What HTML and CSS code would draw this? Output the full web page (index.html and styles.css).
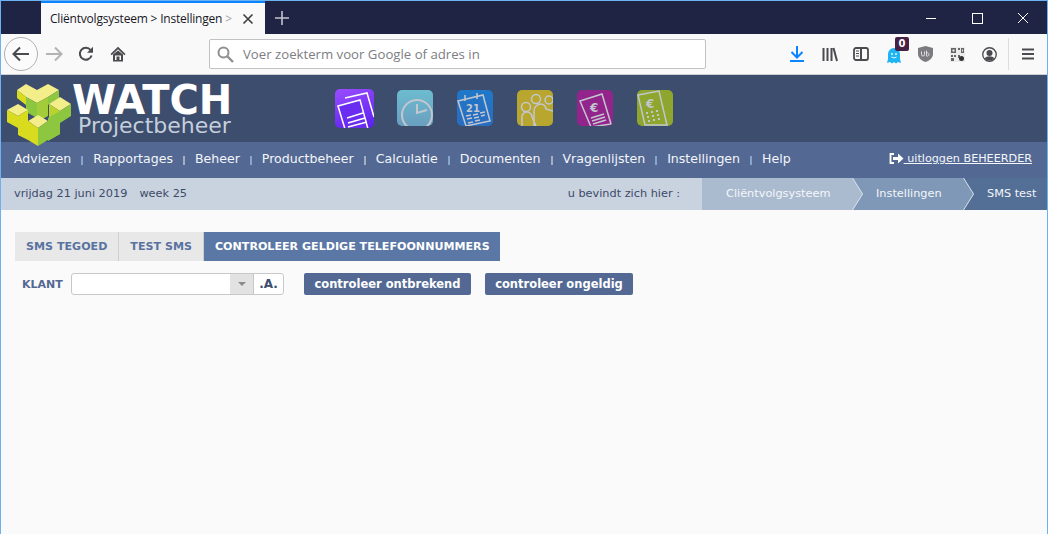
FILE: index.html
```html
<!DOCTYPE html>
<html lang="nl">
<head>
<meta charset="utf-8">
<title>Cliëntvolgsysteem</title>
<link rel="stylesheet" href="styles.css">
</head>
<body>
<div class="window">
  <div class="titlebar">
    <div class="tab">
      <span class="tab-title">Cliëntvolgsysteem &gt; Instellingen <span class="fade">&gt;</span></span>
      <svg class="tab-close" width="12" height="12" viewBox="0 0 12 12"><path d="M1.500 1.500l9 9M10.500 1.500l-9 9" stroke="#3d3d40" stroke-width="1.600" fill="none"/></svg>
    </div>
    <svg class="newtab" width="14" height="14" viewBox="0 0 14 14"><path d="M7 0v14M0 7h14" stroke="#c3c4cf" stroke-width="1.600" fill="none"/></svg>
    <div class="winctl">
      <svg width="46" height="32" viewBox="0 0 46 32"><path d="M18 16.500h10" stroke="#fff" fill="none"/></svg>
      <svg width="46" height="32" viewBox="0 0 46 32"><rect x="18.500" y="11.500" width="10" height="10" stroke="#fff" fill="none"/></svg>
      <svg width="46" height="32" viewBox="0 0 46 32"><path d="M18 11l10 10M28 11L18 21" stroke="#fff" fill="none"/></svg>
    </div>
  </div>
  <div class="toolbar">
    <div class="backbtn"><svg width="18" height="16" viewBox="0 0 18 16"><path d="M1.500 8H17M8 1.500L1.500 8 8 14.500" stroke="#4a4a4f" stroke-width="2" fill="none"/></svg></div>
    <svg class="tb fwd" width="18" height="16" viewBox="0 0 18 16"><path d="M16.500 8H1M10 1.500L16.500 8 10 14.500" stroke="#b3b3b5" stroke-width="2" fill="none"/></svg>
    <svg class="tb reload" width="16" height="16" viewBox="0 0 16 16"><path d="M13.600 9.500A6 6 0 1 1 12.600 4" stroke="#4a4a4f" stroke-width="2" fill="none"/><path d="M15 .8v6h-6z" fill="#4a4a4f"/></svg>
    <svg class="tb home" width="16" height="16" viewBox="0 0 16 16"><path d="M8 .8L.5 8l1.200 1.200L8 3.200l6.300 6 1.200-1.200z" fill="#4a4a4f"/><path d="M3 8.500V15.500h10V8.500L8 4.500z M5 9.500h6V14H9.500v-3.500h-3V14H5z" fill="#4a4a4f" fill-rule="evenodd"/></svg>
    <div class="urlbar">
      <svg width="17" height="17" viewBox="0 0 17 17"><circle cx="6.500" cy="6.500" r="5" stroke="#8e8e93" stroke-width="2" fill="none"/><path d="M10.500 10.500l5.500 5.500" stroke="#8e8e93" stroke-width="2.400"/></svg>
      <span>Voer zoekterm voor Google of adres in</span>
    </div>
    <div class="tb-right">
      <svg class="t1" width="14" height="16" viewBox="0 0 14 16"><path d="M7 0v11M1.500 6L7 11.500 12.500 6" stroke="#0a84ff" stroke-width="2" fill="none"/><path d="M0 15h14" stroke="#0a84ff" stroke-width="2"/></svg>
      <svg class="t2" width="16" height="15" viewBox="0 0 16 15"><path d="M1.500 1v13M5.500 1v13M9.500 1v13M11.500 1l3.500 13" stroke="#4a4a4f" stroke-width="2" fill="none"/></svg>
      <svg class="t3" width="16" height="14" viewBox="0 0 16 14"><rect x="1" y="1" width="14" height="12" rx="2" stroke="#4a4a4f" stroke-width="1.800" fill="none"/><path d="M8 1v12" stroke="#4a4a4f" stroke-width="2"/><path d="M3 4h3M3 6.500h3M3 9h3" stroke="#4a4a4f"/></svg>
      <div class="ghost">
        <svg width="14" height="18" viewBox="0 0 14 18"><path d="M1 8a6 6 0 0 1 12 0v5l1 4-3-1-2 1.500L7 16l-2 1.500L3 16l-3 1 1-4z" fill="#1fb4f4"/><circle cx="5" cy="8" r="1" fill="#e8f8ff"/><circle cx="9" cy="8" r="1" fill="#e8f8ff"/><path d="M4.500 11q2.500 2 5 0" stroke="#e8f8ff" fill="none"/></svg>
        <span class="badge">0</span>
      </div>
      <svg class="t5" width="15" height="16" viewBox="0 0 15 16"><path d="M0 2l7.500-2L15 2v6c0 4-4 7-7.500 8C4 15 0 12 0 8z" fill="#7b7b80"/><path d="M3.500 5.500v3a1.500 1.500 0 0 0 3 0v-3M8.500 4.500v5.500M8.500 7a1.700 1.700 0 1 1 0 3" stroke="#e0e0e2" fill="none"/></svg>
      <svg class="t6" width="15" height="15" viewBox="0 0 15 15"><rect width="15" height="15" fill="#ececec"/><path d="M1 1h5v5H1zM8 1h2v2H8zM11 1h3v5h-3zM1 8h2v2H1zM4 8h2v2H4zM1 11h3v3H1zM8 8h2v3H8z" fill="#666"/><path d="M2.500 2.500h2v2h-2zM12 2.500h1v2h-1z" fill="#ececec"/><circle cx="11.500" cy="11.500" r="2.500" fill="#333"/></svg>
      <svg class="t7" width="15" height="15" viewBox="0 0 16 16"><circle cx="8" cy="8" r="7.200" stroke="#4a4a4f" stroke-width="1.400" fill="none"/><circle cx="8" cy="6.500" r="3.200" fill="#4a4a4f"/><path d="M2.800 12a6 4 0 0 1 10.400 0A7 7 0 0 1 2.800 12z" fill="#4a4a4f"/></svg>
      <span class="tb-sep"></span>
      <svg class="t8" width="12" height="12" viewBox="0 0 12 12"><path d="M0 1.500h12M0 6h12M0 10.500h12" stroke="#4a4a4f" stroke-width="2"/></svg>
    </div>
  </div>
  <div class="page">
    <header class="brand">
      <div class="logo-wrap">
        <svg class="logo" width="80" height="72" viewBox="0 0 80 72">
          <polygon points="26,6 37,12 48,6 59,12 48,19 37,25 26,19 17,12" fill="#f3ee8a"/>
          <polygon points="17,12 26,19 26,27 17,20" fill="#d9dc1e"/>
          <polygon points="48,19 59,12 59,20 48,27" fill="#8dc63f"/>
          <polygon points="26,19 37,25 37,40 26,34" fill="#8dc63f"/>
          <polygon points="37,25 48,19 48,38 37,44" fill="#a3cc3a"/>
          <polygon points="60,19 71,26 60,33 49,26" fill="#f3ee8a"/>
          <polygon points="49,26 60,33 60,56 49,62" fill="#b9d22e"/>
          <polygon points="60,33 71,26 71,38 60,45 60,56 48,63 48,40" fill="#8dc63f"/>
          <polygon points="18,26 28,32 18,38 7,32" fill="#f3ee8a"/>
          <polygon points="7,32 18,38 18,50 7,44" fill="#d9dc1e"/>
          <polygon points="18,38 28,32 28,62 18,57" fill="#d9dc1e"/>
          <polygon points="38,37 48,43 38,50 28,43" fill="#f3ee8a"/>
          <polygon points="28,43 38,50 38,68 28,62" fill="#d9dc1e"/>
          <polygon points="38,50 48,43 48,62 38,68" fill="#8dc63f"/>
        </svg>
        <div class="wordmark">
          <div class="wm-big">WATCH</div>
          <div class="wm-small">Projectbeheer</div>
        </div>
      </div>
      <div class="apps">
        <span class="app a1"><svg width="39" height="39" viewBox="0 0 39 39"><path d="M10 9l22-5 7 24" stroke="#fff" stroke-width="1.500" fill="none"/><path d="M3 17l22-6 8 29H10z" fill="#6a2cf0" stroke="#fff" stroke-width="1.500"/><path d="M12 29l16-5M13 34l17-5M13 38l19-5" stroke="#fff" stroke-width="1.500"/></svg></span>
        <span class="app a2"><svg width="36" height="36" viewBox="0 0 36 36"><circle cx="20" cy="25" r="15" stroke="#c2c7cf" stroke-width="2" fill="none"/><path d="M20 14v9l10-3" stroke="#c2c7cf" stroke-width="2" fill="none"/></svg></span>
        <span class="app a3"><svg width="36" height="36" viewBox="0 0 36 36"><path d="M1 11l25-6 7 26-24 5z" fill="none" stroke="#c2c7cf" stroke-width="1.500"/><path d="M8 5v6M20 3v6" stroke="#c2c7cf" stroke-width="1.500"/><text x="9" y="22" class="cal">21</text><path d="M9 26l5-1M16 25l5-1M23 23l5-1M10 29l5-1M17 28l5-1M24 26l4-1M11 33l5-1M18 31l5-1" stroke="#c2c7cf" stroke-width="1.500"/></svg></span>
        <span class="app a4"><svg width="36" height="36" viewBox="0 0 36 36"><circle cx="9" cy="17" r="4.500" stroke="#c2c7cf" stroke-width="1.500" fill="none"/><circle cx="19" cy="9" r="4.500" stroke="#c2c7cf" stroke-width="1.500" fill="none"/><circle cx="32" cy="10" r="4" stroke="#c2c7cf" stroke-width="1.500" fill="none"/><path d="M5 36V27a5 5 0 0 1 10 0l4 9M17 36V21a7 7 0 0 1 7-7 5 5 0 0 1 5 5l7 2" stroke="#c2c7cf" stroke-width="1.500" fill="none"/></svg></span>
        <span class="app a5"><svg width="36" height="36" viewBox="0 0 36 36"><path d="M3 11l22-7 9 30-20 3z" fill="none" stroke="#c2c7cf" stroke-width="1.500"/><text x="13" y="22" class="eur">€</text><path d="M14 28l13-4M15 31l13-4M16 34l13-4" stroke="#c2c7cf" stroke-width="1.500"/></svg></span>
        <span class="app a6"><svg width="36" height="36" viewBox="0 0 36 36"><path d="M1 5l21-4 8 34H8z" fill="none" stroke="#c2c7cf" stroke-width="1.500"/><text x="9" y="18" class="eur">€</text><path d="M9 23h2M14 22h2M19 21h2M10 27h2M15 26h2M20 25h2M11 31h2M16 30h2M21 29h2" stroke="#c2c7cf" stroke-width="2"/></svg></span>
      </div>
    </header>
    <nav class="mainnav">
      <a>Adviezen</a><i class="s1"></i>
      <a>Rapportages</a><i class="s2"></i>
      <a>Beheer</a><i class="s1"></i>
      <a>Productbeheer</a><i class="s2"></i>
      <a>Calculatie</a><i class="s1"></i>
      <a>Documenten</a><i class="s2"></i>
      <a>Vragenlijsten</a><i class="s1"></i>
      <a>Instellingen</a><i class="s1"></i>
      <a>Help</a>
      <a class="logout"><svg width="15" height="11" viewBox="0 0 15 11"><path d="M5 1H1.500v9H5" stroke="#fff" stroke-width="1.800" fill="none"/><path d="M4 4h5V.5l5.500 5-5.500 5V7H4z" fill="#fff"/></svg><span>&nbsp;uitloggen BEHEERDER</span></a>
    </nav>
    <div class="crumbs">
      <span class="date">vrijdag 21 juni 2019</span>
      <span class="week">week 25</span>
      <span class="here">u bevindt zich hier :</span>
      <span class="crumb c1">Cliëntvolgsysteem</span>
      <span class="crumb c2">Instellingen</span>
      <span class="crumb c3">SMS test</span>
    </div>
    <main class="content">
      <div class="tabs">
        <span class="ptab">SMS TEGOED</span>
        <span class="ptab">TEST SMS</span>
        <span class="ptab active">CONTROLEER GELDIGE TELEFOONNUMMERS</span>
      </div>
      <div class="form">
        <label class="lbl">KLANT</label>
        <div class="combo">
          <span class="combo-input"></span>
          <span class="combo-arrow"><i></i></span>
          <span class="combo-a">.A.</span>
        </div>
        <button class="btn b1">controleer ontbrekend</button>
        <button class="btn b2">controleer ongeldig</button>
      </div>
    </main>
  </div>
</div>
</body>
</html>
```
FILE: styles.css
```css
* { box-sizing: border-box; }
html, body { margin: 0; height: 100%; }
body { overflow: hidden; background: #fafafa; }
.window { width: 1048px; height: 534px; display: flex; flex-direction: column; border: 1px solid #6cb2f0; border-bottom: 0; }
.titlebar { height: 33px; background: #1f2344; display: flex; align-items: center; flex: none; }
.tab { width: 224px; height: 33px; margin-left: 40px; background: #f9f9fa; border-top: 2px solid #0a84ff; display: flex; align-items: center; padding-left: 9px; position: relative; flex: none; }
.tab-title { font: 12px "Open Sans", sans-serif; color: #18181f; white-space: nowrap; letter-spacing: -.2px; }
.fade { color: #a0a0a4; }
.tab-close { position: absolute; left: 201px; top: 10px; }
.newtab { margin-left: 10px; }
.winctl { margin-left: auto; display: flex; margin-right: 1px; }
.winctl svg { display: block; }
.toolbar { height: 41px; background: #f9f9fa; border-bottom: 1px solid #d0d0d2; display: flex; align-items: center; flex: none; position: relative; }
.backbtn { width: 34px; height: 34px; border: 1px solid #b1b1b3; border-radius: 50%; margin-left: 3px; display: flex; align-items: center; justify-content: center; background: #fbfbfb; flex: none; }
.tb { flex: none; display: block; }
.fwd { margin-left: 7px; }
.reload { margin-left: 15px; }
.home { margin-left: 16px; }
.urlbar { width: 497px; height: 30px; margin-left: 83px; background: #fff; border: 1px solid #c2c2c4; border-radius: 2px; display: flex; align-items: center; padding-left: 7px; gap: 9px; flex: none; }
.urlbar span { font: 13.2px/1 "Open Sans", sans-serif; color: #7d7d82; padding-top: 2px; }
.tb-right { flex: 1; position: relative; height: 40px; display: flex; align-items: center; }
.t1 { margin-left: 84px; }
.t2 { margin-left: 18px; }
.t3 { margin-left: 15px; }
.ghost { margin-left: 18px; position: relative; width: 14px; height: 18px; margin-top: 2px; }
.ghost svg { display: block; }
.badge { position: absolute; left: 8px; top: -9px; width: 14px; height: 14px; background: #472046; color: #fff; border-radius: 2px; font: bold 10px "DejaVu Sans", sans-serif; text-align: center; line-height: 14px; }
.t5 { margin-left: 17px; }
.t6 { margin-left: 17px; }
.t7 { margin-left: 17px; }
.tb-sep { width: 1px; height: 32px; background: #dcdcdd; margin-left: 11px; }
.t8 { margin-left: 13px; }
.page { flex: 1; display: flex; flex-direction: column; min-height: 0; background: #fafafa; }
.brand { height: 67px; background: #3c4d6e; display: flex; flex: none; position: relative; }
.logo-wrap { display: flex; width: 328px; position: relative; flex: none; }
.logo { position: absolute; left: -1px; top: 3px; z-index: 2; }
.wordmark { margin-left: 71px; color: #fff; }
.wm-big { font: bold 40px/1 "DejaVu Sans", sans-serif; margin-top: 5px; height: 35px; }
.wm-small { font: 22px/1 "DejaVu Sans", sans-serif; color: #c5cfdc; margin-left: 6px; }
.apps { display: flex; gap: 24px; padding: 15px 0 0 6px; }
.app { width: 36px; height: 36px; border-radius: 5px; overflow: hidden; display: block; }
.app svg { display: block; }
.a1 { width: 39px; height: 39px; margin-top: -1px; background: linear-gradient(160deg, #9a4dff, #5a1ff0); margin-right: -1px; }
.a2 { background: linear-gradient(180deg, #6cbccf, #6a9fc0); }
.a3 { background: linear-gradient(180deg, #1f78c8, #2a6cc0); }
.a4 { background: #b8a62e; }
.a5 { background: #92248b; }
.a6 { background: #8ea62e; }
.cal { font: bold 10px "DejaVu Sans", sans-serif; fill: #c2c7cf; }
.eur { font: bold 12px "DejaVu Sans", sans-serif; fill: #c2c7cf; }
.mainnav { height: 36px; background: #536994; display: flex; align-items: center; padding: 0 0 3px 13px; flex: none; font: 12.55px "DejaVu Sans", sans-serif; color: #fff; }
.mainnav a { color: #f4f6fa; white-space: nowrap; }
.mainnav i { width: 2px; height: 9px; margin: 3px 10px 0; display: block; }
.s1 { background: #88a6cc; }
.s2 { background: #a5afc2; }
.logout { margin-left: auto; margin-right: 15px; display: flex; align-items: center; font-size: 11.2px; }
.logout span { text-decoration: underline; }
.crumbs { height: 32px; background: #c9d3df; display: flex; align-items: center; font: 11.3px "DejaVu Sans", sans-serif; color: #3c4a68; padding: 0 0 1px 13px; flex: none; overflow: hidden; }
.week { margin-left: 12px; }
.here { margin-left: auto; margin-right: 22px; }
.crumb { height: 32px; margin-bottom: -1px; padding-bottom: 1px; display: flex; align-items: center; color: #f4f6fa; position: relative; white-space: nowrap; flex: none; padding-left: 24px; }
.crumb::after { content: ""; position: absolute; right: -10px; top: 0; width: 10px; height: 32px; clip-path: polygon(0 0, 100% 50%, 0 100%); background: inherit; z-index: 2; }
.crumb::before { content: ""; position: absolute; right: -11px; top: 0; width: 11px; height: 32px; clip-path: polygon(0 0, 1px 0, 100% 50%, 1px 100%, 0 100%, 10px 50%); background: #e6ebf1; z-index: 3; }
.c1 { background: #abbbcf; width: 150px; }
.c2 { background: #7f98b7; width: 111px; }
.c3 { background: #536f96; width: 84px; }
.c3::after, .c3::before { display: none; }
.content { flex: 1; padding: 22px 14px 0; }
.tabs { display: flex; height: 29px; }
.ptab { display: flex; align-items: center; padding: 0 11px; background: #e8e8e8; color: #5873a0; font: bold 11.1px "DejaVu Sans", sans-serif; border-right: 1px solid #cfcfcf; white-space: nowrap; }
.ptab.active { background: #5a77a5; color: #fff; border-right: 0; padding-right: 10px; }
.form { display: flex; align-items: center; margin-top: 12px; height: 22px; }
.lbl { font: bold 11px "DejaVu Sans", sans-serif; color: #536994; margin-left: 7px; width: 49px; }
.combo { display: flex; width: 213px; height: 22px; border: 1px solid #c8c8c8; border-radius: 3px; background: #fff; overflow: hidden; }
.combo-input { width: 158px; }
.combo-arrow { width: 23px; background: #e2e2e2; display: flex; align-items: center; justify-content: center; }
.combo-arrow i { border: 4px solid transparent; border-top: 4px solid #8a8a8a; border-bottom: 0; display: block; }
.combo-a { flex: 1; border-left: 1px solid #c8c8c8; font: bold 12px "DejaVu Sans", sans-serif; color: #3c4d6e; display: flex; align-items: center; justify-content: center; }
.btn { height: 22px; border: 0; border-radius: 2px; background: #536994; color: #fff; font: bold 11.5px "DejaVu Sans", sans-serif; padding: 0; }
.b1 { width: 167px; margin-left: 20px; }
.b2 { width: 148px; margin-left: 14px; }
```
